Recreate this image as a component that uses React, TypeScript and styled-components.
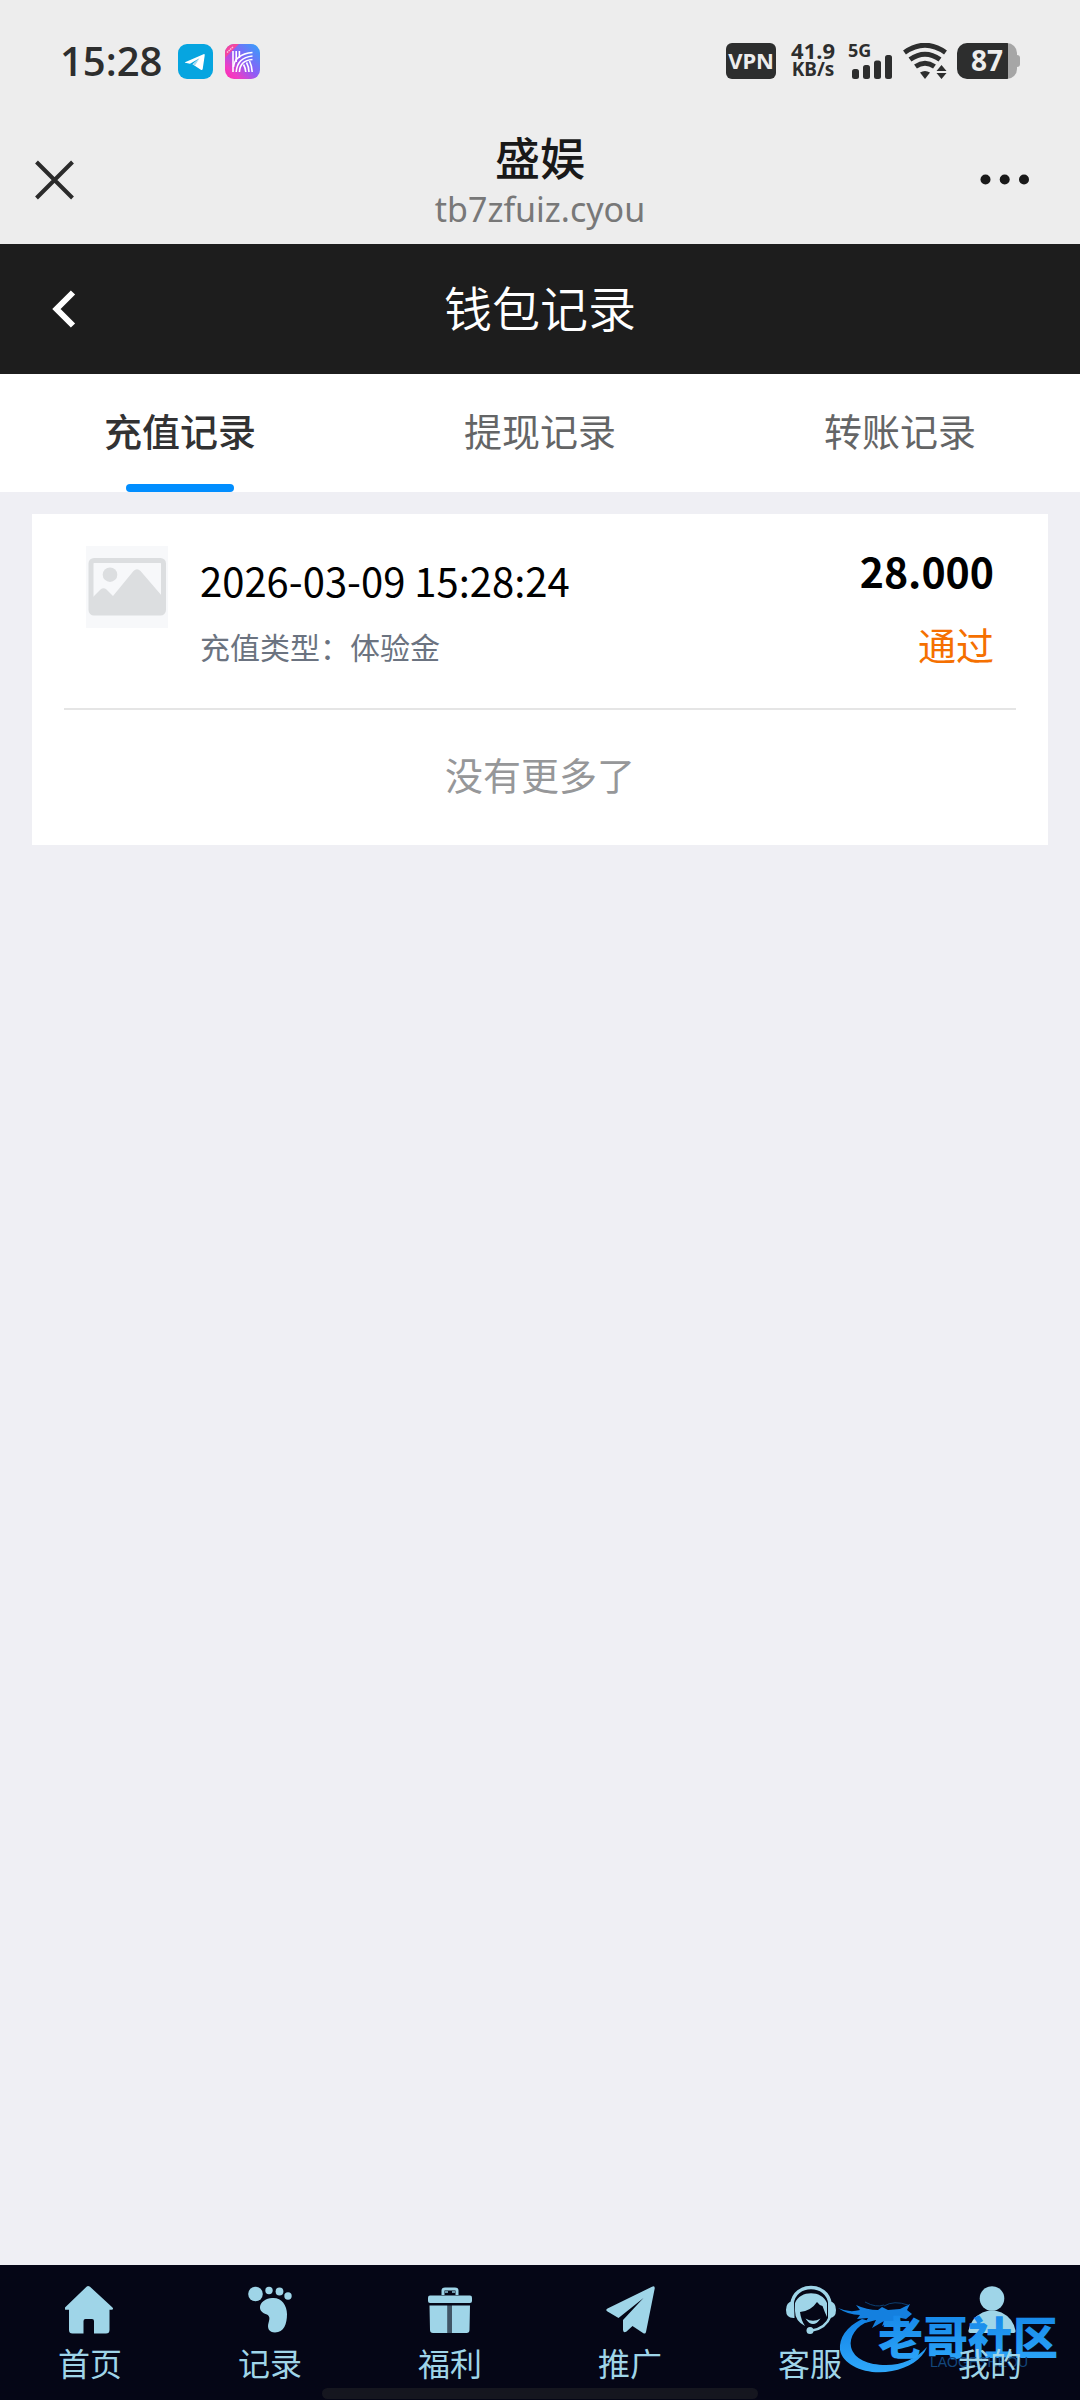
import React, { useState } from 'react';
import styled, { createGlobalStyle, css } from 'styled-components';

const GlobalStyle = createGlobalStyle`
  * { box-sizing: border-box; }
  body {
    margin: 0;
    background: #efeff4;
    font-family: 'Noto Sans CJK SC', 'Noto Sans', sans-serif;
  }
  button { font: inherit; border: 0; padding: 0; background: none; cursor: pointer; }
  svg { display: block; }
`;

const Page = styled.div`
  min-height: 100vh;
  display: flex;
  flex-direction: column;
`;

/* ---------- phone status bar ---------- */

const StatusBar = styled.div`
  height: 122px;
  padding: 0 60px;
  display: flex;
  justify-content: space-between;
  align-items: center;
  background: #ededed;
  color: #2d2e2e;
`;

const StatusGroup = styled.div<{ $gap: number }>`
  display: flex;
  align-items: center;
  gap: ${(p) => p.$gap}px;
`;

const Clock = styled.time`
  margin-right: 4px;
  font: 600 40px/40px 'Open Sans', sans-serif;
`;

const VpnBadge = styled.span`
  width: 50px;
  height: 36px;
  margin-right: 5px;
  border-radius: 6px;
  background: #2d2e2e;
  color: #ededed;
  font: 700 22px/35px 'Noto Sans', sans-serif;
  text-align: center;
`;

const Speed = styled.span`
  display: flex;
  flex-direction: column;
  align-items: center;
  padding-bottom: 2px;
  margin-right: 5px;
  font: 700 22px/19px 'Noto Sans', sans-serif;
`;

const SpeedUnit = styled.span`
  font-size: 19px;
`;

const Battery = styled.span`
  display: flex;
  align-items: center;
`;

const BatteryBody = styled.span`
  width: 60px;
  height: 36px;
  border-radius: 10px;
  background: linear-gradient(to right, #2d2e2e 51px, #a6a6a6 51px);
  color: #ededed;
  font: 700 28px/35px 'Noto Sans', sans-serif;
  text-align: center;
`;

const BatteryTip = styled.span`
  width: 3px;
  height: 12px;
  border-radius: 0 3px 3px 0;
  background: #a6a6a6;
`;

/* ---------- browser header ---------- */

const BrowserBar = styled.header`
  height: 122px;
  padding: 0 32px;
  display: grid;
  grid-template-columns: 1fr auto 1fr;
  align-items: center;
  background: #ededed;
`;

const BarButton = styled.button<{ $end?: boolean }>`
  justify-self: ${(p) => (p.$end ? 'end' : 'start')};
  padding-bottom: 8px;
`;

const SiteInfo = styled.div`
  text-align: center;
`;

const SiteName = styled.div`
  font-size: 45px;
  line-height: 52px;
  font-weight: 500;
  color: #191919;
`;

const SiteUrl = styled.div`
  font: 400 34px/52px 'Noto Sans', sans-serif;
  color: #787878;
`;

/* ---------- page header and tabs ---------- */

const PageHeader = styled.header`
  height: 130px;
  padding: 0 44px;
  display: grid;
  grid-template-columns: 1fr auto 1fr;
  align-items: center;
  background: #1d1d1d;
  color: #fff;
`;

const PageTitle = styled.h1`
  margin: 0;
  padding-bottom: 6px;
  font-size: 48px;
  line-height: 64px;
  font-weight: 350;
`;

const Tabs = styled.div`
  display: grid;
  grid-template-columns: repeat(3, 1fr);
  background: #fff;
`;

const Tab = styled.button<{ $active: boolean }>`
  position: relative;
  height: 118px;
  padding-bottom: 6px;
  font-size: 38px;
  line-height: 56px;
  font-weight: ${(p) => (p.$active ? 500 : 400)};
  color: ${(p) => (p.$active ? '#323233' : '#646566')};
  ${(p) =>
    p.$active &&
    css`
      &::after {
        content: '';
        position: absolute;
        left: 50%;
        bottom: 0;
        width: 108px;
        height: 8px;
        margin-left: -54px;
        border-radius: 4px;
        background: #018eff;
      }
    `}
`;

/* ---------- records ---------- */

const Content = styled.main`
  flex: 1;
  padding: 22px 32px;
`;

const Card = styled.section`
  padding: 32px 32px 0;
  background: #fff;
`;

const RecordList = styled.ul`
  margin: 0;
  padding: 0;
  list-style: none;
`;

const RecordItem = styled.li`
  display: flex;
  gap: 32px;
  padding: 0 22px 38px;
  border-bottom: 2px solid #e5e5e5;
`;

const Thumb = styled.div`
  width: 82px;
  height: 82px;
  background: #f7f8fa;
`;

const RecordText = styled.div`
  flex: 1;
  padding-top: 6px;
`;

const RecordDate = styled.div`
  font-size: 40px;
  line-height: 56px;
  color: #000;
`;

const RecordType = styled.div`
  margin-top: 16px;
  font-size: 30px;
  line-height: 44px;
  color: #6b7380;
`;

const RecordResult = styled.div`
  text-align: right;
`;

const Amount = styled.div`
  font-size: 41px;
  line-height: 48px;
  font-weight: 700;
  color: #000;
`;

const State = styled.div`
  margin-top: 24px;
  font-size: 38px;
  line-height: 52px;
  color: #f57000;
`;

const EndNote = styled.p`
  margin: 0;
  padding: 36px 0 44px;
  text-align: center;
  font-size: 38px;
  line-height: 55px;
  color: #969799;
`;

/* ---------- bottom navigation ---------- */

const BottomNav = styled.nav`
  position: relative;
  display: grid;
  grid-template-columns: repeat(6, 1fr);
  padding: 21px 0 18px;
  background: #050616;
`;

const NavLink = styled.a`
  display: flex;
  flex-direction: column;
  align-items: center;
  gap: 8px;
  color: #9fd5e8;
  text-decoration: none;
`;

const NavLabel = styled.span`
  position: relative;
  z-index: 2;
  font-size: 32px;
  line-height: 40px;
`;

const Watermark = styled.svg`
  position: absolute;
  right: 16px;
  bottom: 20px;
  z-index: 1;
  pointer-events: none;
`;

const HomeIndicator = styled.div`
  position: absolute;
  left: 50%;
  bottom: 1px;
  width: 436px;
  height: 11px;
  margin-left: -218px;
  border-radius: 6px;
  background: #15161f;
`;

/* ---------- drawings ---------- */

const TelegramIcon = () => (
  <svg width="35" height="35" viewBox="0 0 35 35" aria-hidden="true">
    <rect width="35" height="35" rx="9" fill="#06a5e0" />
    <path d="M7 18.200 25.500 10.200Q27 9.800 26.700 11.500L24.700 25Q24.300 26.600 22.800 25.800L14.500 20.300 21.500 14.200 12 19.800 7.200 18.800Q6.500 18.500 7 18.200z" fill="#fff" />
    <path d="M14.500 20.300 21.500 14.200 17 21.500z" fill="#a5daf1" />
  </svg>
);

const StripeAppIcon = () => (
  <svg width="35" height="35" viewBox="0 0 35 35" aria-hidden="true">
    <defs>
      <linearGradient id="stripeBg" x1="0" y1="1" x2="1" y2="0">
        <stop offset="0" stopColor="#ff2bb0" />
        <stop offset=".2" stopColor="#f03cc4" />
        <stop offset=".5" stopColor="#8f5cf6" />
        <stop offset="1" stopColor="#2ea5fb" />
      </linearGradient>
    </defs>
    <rect width="35" height="35" rx="9" fill="url(#stripeBg)" />
    <path d="M0 14V9a9 9 0 0 1 9-9h5z" fill="#f4469f" />
    <path d="M2 8.500 8.500 2.500" stroke="#fbc2e0" strokeWidth="1.500" strokeDasharray="1.500 .7" />
    <g fill="none" stroke="#fff" strokeWidth="1.600">
      <path d="M8 7v21M11.200 7v11M14.400 7v7" />
      <path d="M27.500 8.500C17 9.500 9.500 14 8.500 23" />
      <path d="M27.500 12C18 13 12 17 11.200 28" />
      <path d="M27.500 15.500C20 16 14.800 20 14.400 28" />
      <path d="M18.500 20.500Q20.500 24 20.800 28M21.500 18.500Q24 23 24 28M24.500 17Q27 22 27.200 28" />
    </g>
  </svg>
);

const SignalIcon = () => (
  <svg width="43" height="36" viewBox="0 0 43 36" fill="#2d2e2e" overflow="visible" aria-hidden="true">
    <text x="-2" y="14" fontFamily="Noto Sans, sans-serif" fontSize="18" fontWeight="700">5G</text>
    <rect x="2" y="26" width="7" height="10" rx="2.500" />
    <rect x="13" y="22" width="7" height="14" rx="2.500" />
    <rect x="24" y="17.500" width="7" height="18.500" rx="2.500" />
    <rect x="35" y="12" width="7" height="24" rx="2.500" />
  </svg>
);

const WifiIcon = () => (
  <svg width="44" height="36" viewBox="0 0 44 36" fill="none" stroke="#2d2e2e" strokeWidth="5" aria-hidden="true">
    <path d="M1.500 9.500Q22-5 42.500 9.500" />
    <path d="M7 16.500Q22 6 37 16.500" />
    <path d="M12.500 23.500Q22 17 31.500 23.500" />
    <path d="M17 29.500Q22 26.500 27 29.500L22 36z" fill="#2d2e2e" stroke="none" />
    <path d="M38.500 22 43.500 28H33.500zM38.500 36 43.500 30H33.500z" fill="#2d2e2e" stroke="none" />
  </svg>
);

const CloseIcon = () => (
  <svg width="45" height="45" viewBox="0 0 45 45" stroke="#2b2b2b" strokeWidth="4" aria-hidden="true">
    <path d="M4.500 5l36 36M40.500 5l-36 36" />
  </svg>
);

const MoreIcon = () => (
  <svg width="68" height="45" viewBox="0 0 68 45" fill="#191919" aria-hidden="true">
    <circle cx="5.500" cy="22.500" r="5" />
    <circle cx="24.700" cy="22.500" r="5" />
    <circle cx="44" cy="22.500" r="5" />
  </svg>
);

const BackIcon = () => (
  <svg width="40" height="42" viewBox="0 0 40 42" fill="none" stroke="#fff" strokeWidth="6" aria-hidden="true">
    <path d="M29 4.500 12.500 21 29 37.500" />
  </svg>
);

const PictureIcon = () => (
  <svg width="82" height="82" viewBox="0 0 82 82" aria-hidden="true">
    <rect x="5" y="14.500" width="72.500" height="52.500" rx="3" fill="#f7f8fa" stroke="#dcdee0" strokeWidth="5" />
    <circle cx="24" cy="28.700" r="7.300" fill="#dcdee0" />
    <path d="M7 51 14.500 43.500Q17.500 41 20.500 43.500L27 50 47.500 25Q51 21.500 54.500 25L76 50V66H7z" fill="#dcdee0" />
  </svg>
);

const HomeIcon = () => (
  <svg width="50" height="48" viewBox="1 0 50 48" fill="#9fd5e8" aria-hidden="true">
    <path d="M24 0Q25 0 26 .8L48.500 21.500Q50 23.500 47.500 23.800H45.500V44Q45.500 47.500 42 47.500H30V35Q30 33 28 33H21.500Q19.500 33 19.500 35V47.500H8.500Q5 47.500 5 44V23.800H2Q0 23.500 1 21.500L22.500.8Q23.500 0 24 0z" />
  </svg>
);

const FootIcon = () => (
  <svg width="44" height="48" viewBox="0 0 44 48" fill="#9fd5e8" aria-hidden="true">
    <circle cx="7.500" cy="8" r="7.300" />
    <circle cx="21" cy="4.500" r="3.700" />
    <circle cx="31.500" cy="5.500" r="3.900" />
    <circle cx="40" cy="10" r="3.700" />
    <path d="M24 12C33 11 39 19 39 28 39 38 36 46.500 27 46.500 21 46.500 19 42 20.500 37 22 32 22 29.500 17.500 28 8 24.500 11.500 13 24 12z" />
  </svg>
);

const GiftIcon = () => (
  <svg width="44" height="48" viewBox="0 0 44 48" fill="#9fd5e8" aria-hidden="true">
    <path d="M15 9V4.500Q15 3 17 3H27Q29 3 29 4.500V9" fill="none" stroke="#9fd5e8" strokeWidth="3" />
    <path d="M17 6h10" stroke="#6f9aad" strokeWidth="2" strokeDasharray="3 4" />
    <rect x="0" y="9.500" width="44" height="7.500" rx="2" />
    <path d="M1.500 19.500H19.500V47H5Q2 47 2 44zM24 19.500H42L41.500 44Q41.500 47 38.500 47H24z" />
    <path d="M20 19.500h4V47h-4z" fill="#405566" />
  </svg>
);

const PlaneIcon = () => (
  <svg width="49" height="48" viewBox="0 0 49 48" fill="#9fd5e8" aria-hidden="true">
    <path d="M46 .8Q49-.8 48.700 2.500L40 46Q39.400 48.500 37 47L26.500 40 20.500 45.500Q17.500 47.500 17 44V34L37.500 12 12.500 32 1.500 25.500Q-1 24 1.500 22.500z" />
  </svg>
);

const ServiceIcon = () => (
  <svg width="50" height="48" viewBox="-1 0 50 48" overflow="visible" aria-hidden="true">
    <path d="M6 18C8-4 42-4 44 18" fill="none" stroke="#9fd5e8" strokeWidth="3.500" />
    <path d="M7 16Q1 17 1 24T7.500 31zM43 16Q49 17 49 24T43 31z" fill="#9fd5e8" stroke="#9fd5e8" strokeWidth="2" />
    <path d="M9 17C14 4 36 4 41 17V31Q39 27 36.500 20 33 19 31 16 25 25 14 26 15 34 19 40 9 35 9 25z" fill="#9fd5e8" />
    <path d="M19.500 32.500Q27 37 34.500 32.500Q31 38 27 38T19.500 32.500z" fill="#9fd5e8" />
    <path d="M44.500 30C41 39 35 43 26 44.500" fill="none" stroke="#9fd5e8" strokeWidth="2.500" />
    <circle cx="24" cy="44.500" r="3.500" fill="#9fd5e8" />
  </svg>
);

const PersonIcon = () => (
  <svg width="48" height="48" viewBox="-2 0 48 48" fill="#9fd5e8" overflow="visible" aria-hidden="true">
    <circle cx="24" cy="12.500" r="12.300" />
    <path d="M14.500 26.500Q24 22.500 33.500 26.500Q45 32 47.500 44.500Q48 47 45.500 47H2.500Q0 47 .5 44.500Q3 32 14.500 26.500z" />
  </svg>
);

const CommunityWatermark = () => (
  <Watermark width="228" height="80" viewBox="0 0 228 80" aria-hidden="true">
    <defs>
      <linearGradient id="waterBlue" x1="0" y1="0" x2="0" y2="1">
        <stop offset="0" stopColor="#1182e6" />
        <stop offset="1" stopColor="#2fa8fa" />
      </linearGradient>
    </defs>
    <path d="M26 19C10 27 3 38 4 50 7 66 32 76 56 71 72 68 86 60 91 47 80 59 66 65 50 65 32 65 18 59 15 47 13 37 20 26 33 21z" fill="url(#waterBlue)" />
    <path d="M2 8Q13 13 24 10L20 5Q31 10 42 10L46 7 52 10 64 9 74 4 71 10 76 14 70 19 60 17 66 22 55 21 46 26 48 21 36 28 40 20 29 23 32 18 21 19 24 15Q12 15 2 8z" fill="#1480df" />
    <path d="M48 6Q58 0 72 5M29 2Q40 8 48 5" fill="none" stroke="#0b3e70" strokeWidth="1" />
    <text x="42" y="55" fontFamily="Noto Sans CJK SC, sans-serif" fontSize="45" fontWeight="900" fill="url(#waterBlue)">老哥社区</text>
    <text x="94" y="67" fontFamily="Liberation Sans, sans-serif" fontSize="14" fill="#13477c">LAOGESHEQU</text>
  </Watermark>
);

/* ---------- data ---------- */

const tabs = ['充值记录', '提现记录', '转账记录'];

const records = [
  { date: '2026-03-09 15:28:24', type: '体验金', amount: '28.000', state: '通过' },
];

const navItems = [
  { label: '首页', Icon: HomeIcon },
  { label: '记录', Icon: FootIcon },
  { label: '福利', Icon: GiftIcon },
  { label: '推广', Icon: PlaneIcon },
  { label: '客服', Icon: ServiceIcon },
  { label: '我的', Icon: PersonIcon },
];

export default function App() {
  const [active, setActive] = useState(0);

  return (
    <Page>
      <GlobalStyle />
      <StatusBar>
        <StatusGroup $gap={12}>
          <Clock>15:28</Clock>
          <TelegramIcon />
          <StripeAppIcon />
        </StatusGroup>
        <StatusGroup $gap={10}>
          <VpnBadge>VPN</VpnBadge>
          <Speed>
            41.9
            <SpeedUnit>KB/s</SpeedUnit>
          </Speed>
          <SignalIcon />
          <WifiIcon />
          <Battery>
            <BatteryBody>87</BatteryBody>
            <BatteryTip />
          </Battery>
        </StatusGroup>
      </StatusBar>

      <BrowserBar>
        <BarButton aria-label="关闭"><CloseIcon /></BarButton>
        <SiteInfo>
          <SiteName>盛娱</SiteName>
          <SiteUrl>tb7zfuiz.cyou</SiteUrl>
        </SiteInfo>
        <BarButton $end aria-label="更多"><MoreIcon /></BarButton>
      </BrowserBar>

      <PageHeader>
        <button aria-label="返回"><BackIcon /></button>
        <PageTitle>钱包记录</PageTitle>
      </PageHeader>

      <Tabs role="tablist">
        {tabs.map((name, i) => (
          <Tab key={name} role="tab" aria-selected={i === active} $active={i === active} onClick={() => setActive(i)}>
            {name}
          </Tab>
        ))}
      </Tabs>

      <Content>
        <Card>
          <RecordList>
            {records.map((r) => (
              <RecordItem key={r.date}>
                <Thumb><PictureIcon /></Thumb>
                <RecordText>
                  <RecordDate>{r.date}</RecordDate>
                  <RecordType>充值类型：{r.type}</RecordType>
                </RecordText>
                <RecordResult>
                  <Amount>{r.amount}</Amount>
                  <State>{r.state}</State>
                </RecordResult>
              </RecordItem>
            ))}
          </RecordList>
          <EndNote>没有更多了</EndNote>
        </Card>
      </Content>

      <BottomNav>
        {navItems.map(({ label, Icon }) => (
          <NavLink key={label} href="#">
            <Icon />
            <NavLabel>{label}</NavLabel>
          </NavLink>
        ))}
        <CommunityWatermark />
        <HomeIndicator />
      </BottomNav>
    </Page>
  );
}
